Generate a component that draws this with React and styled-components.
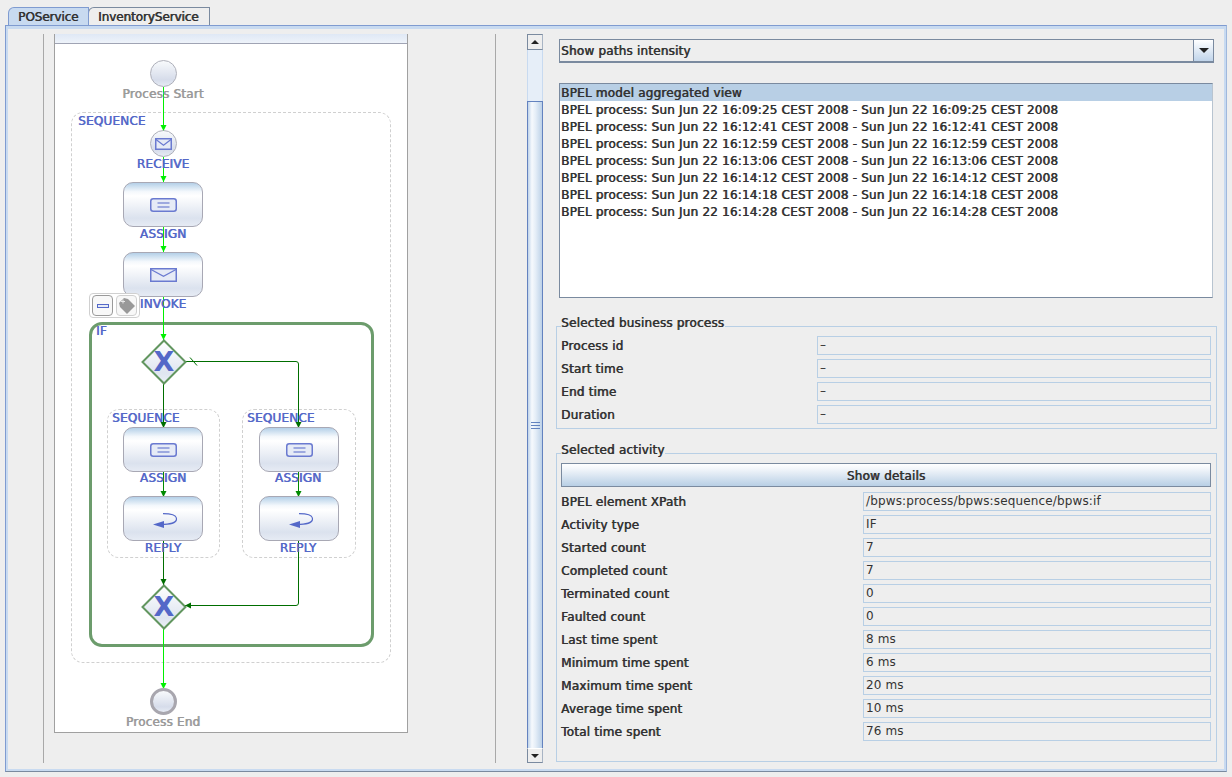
import React from 'react'
import styled, { createGlobalStyle, css } from 'styled-components'

const GlobalStyle = createGlobalStyle`
  html, body {
    margin: 0;
    padding: 0;
    background: #eeeeee;
  }
  body {
    width: 1232px;
    height: 777px;
    overflow: hidden;
    font-family: "DejaVu Sans", sans-serif;
    font-size: 12px;
    color: #333333;
    letter-spacing: 0.15px;
  }
`

// the old swing look: regular glyphs smeared one pixel instead of a real bold cut
const smeared = css`
  font-weight: 400;
  letter-spacing: 0.2px;
  text-shadow: 0.6px 0 0 currentColor;
`

// canvas origin in page pixels, diagram data below is written in page pixels
const OX = 55
const OY = 34

const processes = [
  'Sun Jun 22 16:09:25 CEST 2008',
  'Sun Jun 22 16:12:41 CEST 2008',
  'Sun Jun 22 16:12:59 CEST 2008',
  'Sun Jun 22 16:13:06 CEST 2008',
  'Sun Jun 22 16:14:12 CEST 2008',
  'Sun Jun 22 16:14:18 CEST 2008',
  'Sun Jun 22 16:14:28 CEST 2008',
]

const businessRows = ['Process id', 'Start time', 'End time', 'Duration']

const activityRows = [
  ['BPEL element XPath', '/bpws:process/bpws:sequence/bpws:if'],
  ['Activity type', 'IF'],
  ['Started count', '7'],
  ['Completed count', '7'],
  ['Terminated count', '0'],
  ['Faulted count', '0'],
  ['Last time spent', '8 ms'],
  ['Minimum time spent', '6 ms'],
  ['Maximum time spent', '20 ms'],
  ['Average time spent', '10 ms'],
  ['Total time spent', '76 ms'],
]

const BRIGHT = '#00f000'
const DARK = '#006e00'

const edges = [
  { d: 'M163.5 87V131', c: BRIGHT, tip: [163.5, 131, 'down'] },
  { d: 'M163.5 157V182', c: BRIGHT, tip: [163.5, 182, 'down'] },
  { d: 'M163.5 226V252', c: BRIGHT, tip: [163.5, 252, 'down'] },
  { d: 'M163.5 296V340', c: BRIGHT, tip: [163.5, 340, 'down'] },
  { d: 'M163.5 383V428', c: DARK, tip: [163.5, 428, 'down'] },
  { d: 'M185 361.5H296Q298.5 361.5 298.5 364V428', c: DARK, tip: [298.5, 428, 'down'] },
  { d: 'M163.5 471V497', c: '#008a00', tip: [163.5, 497, 'down'] },
  { d: 'M298.5 471V497', c: '#008a00', tip: [298.5, 497, 'down'] },
  { d: 'M163.5 540V585', c: DARK, tip: [163.5, 585, 'down'] },
  { d: 'M298.5 540V603Q298.5 605.5 296 605.5H185', c: DARK, tip: [185, 605.5, 'left'] },
  { d: 'M163.5 628V689', c: BRIGHT, tip: [163.5, 689, 'down'] },
]

const tipPoints = ([x, y, dir]) =>
  dir === 'down'
    ? `${x - 3},${y - 6} ${x + 3},${y - 6} ${x},${y}`
    : `${x + 6},${y - 3} ${x + 6},${y + 3} ${x},${y}`

const EnvelopeIcon = ({ w = 27, h = 14 }) => (
  <svg width={w} height={h} viewBox={`0 0 ${w} ${h}`}>
    <rect x="0.75" y="0.75" width={w - 1.5} height={h - 1.5} fill="#e6ebf6" stroke="#6a7ad0" strokeWidth="1.5" />
    <path d={`M1 1.5L${w / 2} ${h * 0.6}L${w - 1} 1.5`} fill="none" stroke="#6a7ad0" strokeWidth="1.2" />
  </svg>
)

const AssignIcon = () => (
  <svg width="27" height="14" viewBox="0 0 27 14">
    <rect x="0.75" y="0.75" width="25.5" height="12.5" rx="2.5" fill="#e6ebf6" stroke="#6a7ad0" strokeWidth="1.5" />
    <path d="M7.5 5H19.5M7.5 9H19.5" fill="none" stroke="#5468c8" strokeWidth="1.2" />
  </svg>
)

const ReplyIcon = () => (
  <ReplyGlyph width="24" height="15" viewBox="0 0 24 15">
    <path d="M10 0.6C18 0.6 23.5 2 23.5 6C23.5 9.5 17 11.5 8 11.5" fill="none" stroke="#5468c8" strokeWidth="1.2" />
    <polygon points="0,11.5 11,8 11,15" fill="#5468c8" />
  </ReplyGlyph>
)

const Gateway = ({ x, y }) => (
  <GatewayBox $x={x} $y={y}>
    <svg width="46" height="46" viewBox="0 0 46 46">
      <defs>
        <linearGradient id="gw" x1="0" y1="0" x2="0" y2="1">
          <stop offset="0" stopColor="#ffffff" />
          <stop offset="0.75" stopColor="#dfe5f0" />
          <stop offset="1" stopColor="#eaeff6" />
        </linearGradient>
      </defs>
      <polygon points="23,1.5 44.5,23 23,44.5 1.5,23" fill="url(#gw)" stroke="#62965f" strokeWidth="2" />
    </svg>
    <GatewayMark>X</GatewayMark>
  </GatewayBox>
)

const Activity = ({ x, y, label, labelX, labelY }) => {
  const icons = { ASSIGN: <AssignIcon />, INVOKE: <EnvelopeIcon />, REPLY: <ReplyIcon /> }
  return (
    <>
      <ActivityBox $x={x} $y={y}>{icons[label]}</ActivityBox>
      <NodeLabel $cx={labelX ?? x + 40} $y={labelY ?? y + 45}>{label}</NodeLabel>
    </>
  )
}

export default function App() {
  return (
    <>
      <GlobalStyle />
      <Page>
        <TabStrip>
          <Tab $active>POService</Tab>
          <Tab>InventoryService</Tab>
        </TabStrip>
        <TabPanel>
          <Viewport>
            <Canvas>
              <CanvasHeader />
              <EdgeLayer viewBox={`${OX} ${OY} 352 698`} width="352" height="698">
                {edges.map((e) => (
                  <g key={e.d}>
                    <path d={e.d} fill="none" stroke={e.c} strokeWidth="1" />
                    <polygon points={tipPoints(e.tip)} fill={e.c} />
                  </g>
                ))}
                <path d="M190 357.5L197 365.5" stroke={DARK} strokeWidth="1" />
              </EdgeLayer>

              <DashedBox $x={71} $y={112} $w={320} $h={551} />
              <BlockTitle $x={78} $y={114}>SEQUENCE</BlockTitle>

              <Circle $cx={163} $cy={73} />
              <NodeLabel $cx={163} $y={87} $muted>Process Start</NodeLabel>

              <Circle $cx={163} $cy={143}><EnvelopeIcon w={17} h={12} /></Circle>
              <NodeLabel $cx={163} $y={157}>RECEIVE</NodeLabel>

              <Activity x={123} y={182} label="ASSIGN" />
              <Activity x={123} y={252} label="INVOKE" />

              <IfBox />
              <BlockTitle $x={96} $y={324}>IF</BlockTitle>

              <Gateway x={163} y={361} />

              <DashedBox $x={107} $y={409} $w={113} $h={149} />
              <BlockTitle $x={112} $y={411}>SEQUENCE</BlockTitle>
              <DashedBox $x={242} $y={409} $w={114} $h={149} />
              <BlockTitle $x={247} $y={411}>SEQUENCE</BlockTitle>

              <Activity x={123} y={427} label="ASSIGN" labelY={471} />
              <Activity x={259} y={427} label="ASSIGN" labelX={298} labelY={471} />
              <Activity x={123} y={496} label="REPLY" />
              <Activity x={259} y={496} label="REPLY" labelX={298} />

              <Gateway x={163} y={606} />

              <Circle $cx={163} $cy={701} $end />
              <NodeLabel $cx={163} $y={715} $muted>Process End</NodeLabel>

              <NodeTools>
                <ToolButton>
                  <MinusMark />
                </ToolButton>
                <ToolButton $faded>
                  <svg width="18" height="18" viewBox="0 0 18 18">
                    <polygon points="1,6 6,1 10,2 17,9 9,17 2,10" fill="#999999" />
                    <path d="M3 4.5H7M5 2.5V6.5" stroke="#e8e8e8" strokeWidth="1" />
                  </svg>
                </ToolButton>
              </NodeTools>
            </Canvas>
          </Viewport>

          <ScrollBar>
            <ScrollButton>
              <Arrow $up />
            </ScrollButton>
            <ScrollTrack />
            <ScrollThumb>
              <Grip />
            </ScrollThumb>
            <ScrollButton $bottom>
              <Arrow />
            </ScrollButton>
          </ScrollBar>

          <SidePanel>
            <Combo>
              <ComboText>Show paths intensity</ComboText>
              <ComboButton>
                <Arrow $big />
              </ComboButton>
            </Combo>

            <ProcessList>
              <ListRow $selected>BPEL model aggregated view</ListRow>
              {processes.map((p) => (
                <ListRow key={p}>BPEL process: {p} - {p}</ListRow>
              ))}
            </ProcessList>

            <Group $first>
              <Legend>Selected business process</Legend>
              {businessRows.map((label) => (
                <InfoRow key={label} $labelWidth={256}>
                  <RowLabel>{label}</RowLabel>
                  <RowValue>–</RowValue>
                </InfoRow>
              ))}
            </Group>

            <Group>
              <Legend>Selected activity</Legend>
              <DetailsButton>Show details</DetailsButton>
              {activityRows.map(([label, value]) => (
                <InfoRow key={label} $labelWidth={302}>
                  <RowLabel>{label}</RowLabel>
                  <RowValue>{value}</RowValue>
                </InfoRow>
              ))}
              <GroupEnd />
            </Group>
          </SidePanel>
        </TabPanel>
      </Page>
    </>
  )
}

const Page = styled.div`
  width: 1232px;
  height: 777px;
  padding: 7px 0 0 5px;
  box-sizing: border-box;
`

const TabStrip = styled.div`
  display: flex;
  padding-left: 3px;
  height: 18px;
`

const Tab = styled.div`
  ${smeared}
  letter-spacing: -0.08px;
  width: ${(p) => (p.$active ? 81 : 122)}px;
  height: 18px;
  box-sizing: border-box;
  padding-left: 9px;
  display: flex;
  align-items: center;
  border: 1px solid ${(p) => (p.$active ? '#7f9bd0' : '#7a8a9f')};
  border-bottom: none;
  border-radius: 6px 0 0 0;
  background: ${(p) => (p.$active ? '#c8daf0' : '#eeeeee')};
  color: #333333;
  margin-right: -1px;
  position: relative;
  z-index: ${(p) => (p.$active ? 1 : 0)};
`

const TabPanel = styled.div`
  width: 1222px;
  height: 747px;
  box-sizing: border-box;
  border: 1px solid #7f9bd0;
  border-bottom-color: #7a8a9f;
  border-right-color: #a0b8dc;
  box-shadow: inset 0 3px 0 #c8daf0, inset 2px 0 0 #c8daf0, inset -2px 0 0 #c8daf0, inset 0 -2px 0 #c8daf0;
  padding: 8px 0 0 37px;
  display: flex;
  align-items: flex-start;
`

const Viewport = styled.div`
  width: 453px;
  height: 729px;
  box-sizing: border-box;
  border-left: 1px solid #a8a8a8;
  border-right: 1px solid #a8a8a8;
  padding-left: 10px;
  flex: none;
`

const Canvas = styled.div`
  position: relative;
  width: 354px;
  height: 699px;
  box-sizing: border-box;
  background: #ffffff;
  border: 1px solid #a0a0a0;
  border-top: none;
  overflow: hidden;
`

const CanvasHeader = styled.div`
  height: 9px;
  background: linear-gradient(to bottom, #dfe8f5, #eef3fa);
  border-bottom: 1px solid #a0a4b4;
`

const EdgeLayer = styled.svg`
  position: absolute;
  left: 0;
  top: 0;
  z-index: 1;
`

const DashedBox = styled.div`
  position: absolute;
  left: ${(p) => p.$x - OX}px;
  top: ${(p) => p.$y - OY}px;
  width: ${(p) => p.$w}px;
  height: ${(p) => p.$h}px;
  box-sizing: border-box;
  border: 1px dashed #d0d0d0;
  border-radius: 12px;
`

const IfBox = styled.div`
  position: absolute;
  left: ${89 - OX}px;
  top: ${322 - OY}px;
  width: 285px;
  height: 325px;
  box-sizing: border-box;
  border: 3px solid #6c9c6c;
  border-radius: 13px;
`

const BlockTitle = styled.div`
  ${smeared}
  position: absolute;
  left: ${(p) => p.$x - OX}px;
  top: ${(p) => p.$y - OY}px;
  z-index: 3;
  line-height: 15px;
  color: #5468c8;
`

const NodeLabel = styled.div`
  ${smeared}
  position: absolute;
  left: ${(p) => p.$cx - OX - 60}px;
  top: ${(p) => p.$y - OY}px;
  width: 120px;
  text-align: center;
  z-index: 3;
  line-height: 15px;
  color: ${(p) => (p.$muted ? '#9a9a9a' : '#5468c8')};
`

const Circle = styled.div`
  position: absolute;
  left: ${(p) => p.$cx - OX - 13}px;
  top: ${(p) => p.$cy - OY - 13}px;
  width: 27px;
  height: 27px;
  box-sizing: border-box;
  z-index: 2;
  border: ${(p) => (p.$end ? '3px solid #a8a6ae' : '1px solid #aeb0ba')};
  border-radius: 50%;
  background: linear-gradient(to bottom, #f8fafc 0%, #d6dcea 75%, #e6ebf4 100%);
  display: flex;
  align-items: center;
  justify-content: center;
`

const ActivityBox = styled.div`
  position: absolute;
  left: ${(p) => p.$x - OX}px;
  top: ${(p) => p.$y - OY}px;
  width: 80px;
  height: 45px;
  box-sizing: border-box;
  z-index: 2;
  border: 1px solid #a8a8b4;
  border-radius: 10px;
  background: linear-gradient(to bottom, #b4d0e8 0%, #f4f8fc 20%, #ffffff 30%, #dbe2ee 82%, #e6ebf4 100%);
  display: flex;
  align-items: center;
  justify-content: center;
`

const ReplyGlyph = styled.svg`
  margin: 3px 0 0 3px;
`

const GatewayBox = styled.div`
  position: absolute;
  left: ${(p) => p.$x - OX - 22}px;
  top: ${(p) => p.$y - OY - 22}px;
  width: 46px;
  height: 46px;
  z-index: 2;
  svg {
    display: block;
  }
`

const GatewayMark = styled.span`
  position: absolute;
  left: 0;
  top: 0;
  width: 46px;
  line-height: 46px;
  text-align: center;
  font-size: 27px;
  font-weight: bold;
  color: #5468c8;
`

const NodeTools = styled.div`
  position: absolute;
  left: ${89 - OX}px;
  top: ${293 - OY}px;
  z-index: 4;
  display: flex;
  gap: 3px;
  padding: 1px 2px;
  background: #ffffff;
  border: 1px solid #d0d0d0;
  border-radius: 4px;
`

const ToolButton = styled.div`
  width: 21px;
  height: 21px;
  box-sizing: border-box;
  border: 1px solid ${(p) => (p.$faded ? '#d0d0d0' : '#9a9a9a')};
  border-radius: 4px;
  background: #f8f8f8;
  display: flex;
  align-items: center;
  justify-content: center;
`

const MinusMark = styled.span`
  width: 12px;
  height: 4px;
  box-sizing: border-box;
  border: 1px solid #5468c8;
  background: #e6ebf6;
`

const ScrollBar = styled.div`
  width: 16px;
  height: 729px;
  margin-left: 31px;
  flex: none;
  display: flex;
  flex-direction: column;
`

const ScrollButton = styled.div`
  height: ${(p) => (p.$bottom ? 15 : 16)}px;
  box-sizing: border-box;
  background: #eeeeee;
  border: 1px solid #7a8a9f;
  border-top-color: ${(p) => (p.$bottom ? '#ffffff' : '#7a8a9f')};
  border-right-color: #a8b4c4;
  display: flex;
  align-items: center;
  justify-content: center;
  flex: none;
`

const Arrow = styled.span`
  width: 0;
  height: 0;
  ${(p) => {
    const side = p.$big ? 5 : 4
    return `
      border-left: ${side}px solid transparent;
      border-right: ${side}px solid transparent;
      ${p.$up ? 'border-bottom' : 'border-top'}: ${side}px solid #222222;
    `
  }}
`

const ScrollTrack = styled.div`
  height: 51px;
  flex: none;
  box-sizing: border-box;
  border-left: 1px solid #c8daf0;
  border-right: 1px solid #c8daf0;
  background: #e6eef8;
`

const ScrollThumb = styled.div`
  flex: 1;
  box-sizing: border-box;
  border: 1px solid #6382bf;
  border-bottom: none;
  background: linear-gradient(to right, #c0d4ea 0%, #f6f9fd 28%, #e4edf7 55%, #bcd1e8 100%);
  display: flex;
  align-items: center;
  justify-content: center;
`

const Grip = styled.span`
  width: 9px;
  height: 5px;
  border-top: 1px solid #6382bf;
  border-bottom: 1px solid #6382bf;
  background: linear-gradient(#6382bf, #6382bf) center / 100% 1px no-repeat;
`

const SidePanel = styled.div`
  width: 661px;
  margin-left: 13px;
  flex: none;
  display: flex;
  flex-direction: column;
`

const Combo = styled.div`
  width: 655px;
  height: 24px;
  margin: 5px 0 0 3px;
  box-sizing: border-box;
  border: 1px solid #7a8a9f;
  border-bottom-width: 2px;
  display: flex;
`

const ComboText = styled.div`
  ${smeared}
  flex: 1;
  padding-left: 1px;
  line-height: 22px;
`

const ComboButton = styled.div`
  width: 19px;
  border-left: 1px solid #7a8a9f;
  background: linear-gradient(to bottom, #ffffff, #c0d4ea);
  display: flex;
  align-items: center;
  justify-content: center;
`

const ProcessList = styled.div`
  width: 654px;
  height: 215px;
  margin: 20px 0 0 3px;
  box-sizing: border-box;
  background: #ffffff;
  border-top: 1px solid #7a8a9f;
  border-left: 1px solid #7a8a9f;
  border-right: 1px solid #b8c4d0;
  border-bottom: 1px solid #7a8a9f;
`

const ListRow = styled.div`
  ${smeared}
  height: 17px;
  line-height: 18px;
  padding-left: 1px;
  white-space: nowrap;
  background: ${(p) => (p.$selected ? '#b8cfe5' : 'transparent')};
`

const Group = styled.fieldset`
  margin: ${(p) => (p.$first ? '18px' : '14px')} 0 0 0;
  padding: 0 5px ${(p) => (p.$first ? '4px' : '0')} 4px;
  min-width: 0;
  border: 1px solid #b8cfe5;
  display: flex;
  flex-direction: column;
  gap: 4px;
`

const Legend = styled.legend`
  ${smeared}
  padding: 0 1px 2px 0;
  line-height: 14px;
  height: 20px;
  box-sizing: border-box;
`

const DetailsButton = styled.div`
  ${smeared}
  height: 24px;
  margin-bottom: 1px;
  box-sizing: border-box;
  border: 1px solid #7a8a9f;
  background: linear-gradient(to bottom, #ffffff, #f4f7fb 20%, #b8cfe5);
  text-align: center;
  line-height: 24px;
`

const InfoRow = styled.div`
  display: grid;
  grid-template-columns: ${(p) => p.$labelWidth}px 1fr;
  align-items: center;
  height: 19px;
`

const RowLabel = styled.span`
  ${smeared}
  white-space: nowrap;
`

const RowValue = styled.span`
  height: 19px;
  box-sizing: border-box;
  border: 1px solid #b8cfe5;
  padding-left: 2px;
  line-height: 17px;
  background: #eeeeee;
  color: #333333;
`

const GroupEnd = styled.div`
  height: 16px;
`
